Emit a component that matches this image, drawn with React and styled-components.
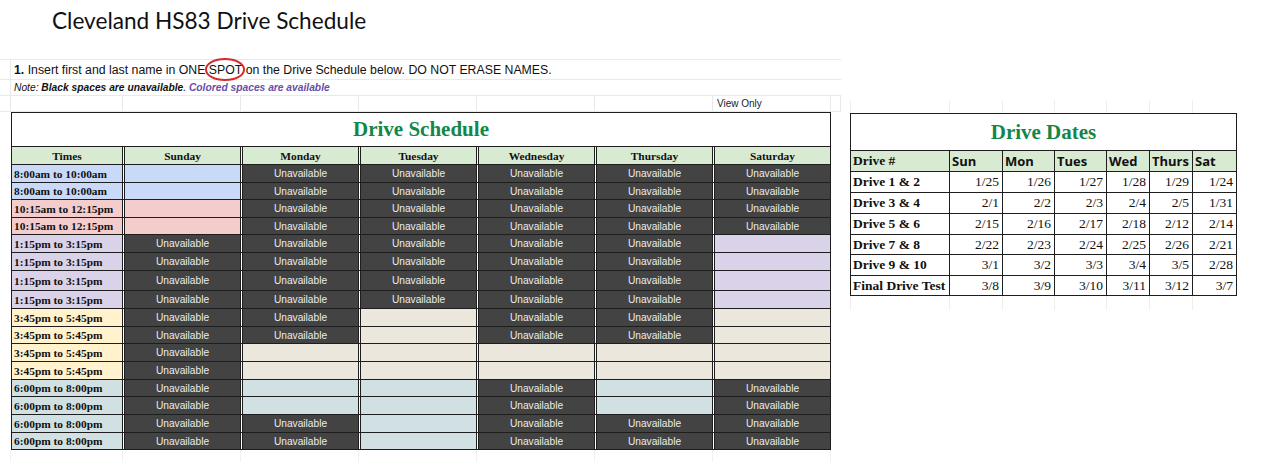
import React from "react";
import styled, { createGlobalStyle } from "styled-components";

const Global = createGlobalStyle`
  html, body { margin: 0; padding: 0; background: #ffffff; }
  * { box-sizing: border-box; }
`;

const C = {
  blue: "#c9daf8",
  pink: "#f4cccc",
  purple: "#d9d2e9",
  yellow: "#fff2cc",
  teal: "#d0e0e3",
  beige: "#ebe7dc",
  dark: "#434343",
  head: "#d9ead3",
  green: "#13874a",
  grid: "#e9e9e9",
  line: "#1e1e1e",
};

const Page = styled.div`
  display: flex;
  align-items: flex-start;
  width: 1278px;
  height: 475px;
  overflow: hidden;
`;

const Left = styled.div`
  display: flex;
  flex-direction: column;
  width: 841px;
  flex: none;
`;

const PageTitle = styled.h1`
  margin: 0;
  height: 59px;
  padding: 8px 0 0 52px;
  font-family: Lato, "Open Sans", sans-serif;
  font-weight: 400;
  font-size: 22.6px;
  line-height: 26px;
  color: #111;
`;

const SheetRow = styled.div`
  display: grid;
  grid-template-columns: 11px 112px repeat(6, 118px) 10px;
  height: ${(p) => p.$h}px;
  border-top: ${(p) => (p.$top ? `1px solid ${C.grid}` : "none")};
`;

const GhostCell = styled.div`
  border-right: 1px solid ${(p) => (p.$fade ? "#f1f1f1" : C.grid)};
  border-bottom: ${(p) => (p.$fade ? "none" : `1px solid ${C.grid}`)};
`;

const TextCell = styled.div`
  grid-column: 2 / -1;
  display: flex;
  align-items: center;
  padding-left: 3px;
  white-space: nowrap;
  border-bottom: 1px solid ${C.grid};
  font-family: "Liberation Sans", Arial, sans-serif;
  font-size: ${(p) => p.$size}px;
  font-style: ${(p) => (p.$italic ? "italic" : "normal")};
  color: #111;
`;

const Spot = styled.span`
  position: relative;
  &::after {
    content: "";
    position: absolute;
    left: -4px;
    right: -3px;
    top: -5px;
    bottom: -4px;
    border: 2px solid #d62b2b;
    border-radius: 50%;
  }
`;

const Purple = styled.b`
  color: #674ea7;
`;

const ViewOnly = styled.div`
  display: flex;
  align-items: center;
  padding-left: 4px;
  border-right: 1px solid ${C.grid};
  border-bottom: 1px solid ${C.grid};
  font-family: "Liberation Sans", Arial, sans-serif;
  font-size: 10px;
  color: #222;
  white-space: nowrap;
`;

const Schedule = styled.div`
  margin-left: 11px;
  width: 820px;
  border: 1px solid ${C.line};
  background: #fff;
`;

const BigTitle = styled.div`
  height: ${(p) => p.$h}px;
  display: flex;
  align-items: center;
  justify-content: center;
  font-family: "Liberation Serif", "Times New Roman", serif;
  font-weight: 700;
  font-size: 21px;
  color: ${C.green};
  border-bottom: ${(p) => (p.$border ? `1px solid ${C.line}` : "none")};
`;

const SRow = styled.div`
  display: grid;
  grid-template-columns: 110px repeat(6, 118px);
  height: ${(p) => p.$h}px;
  border-top: 1px solid ${C.line};
  background: #fff;
`;

const SCell = styled.div`
  display: flex;
  align-items: center;
  justify-content: ${(p) => (p.$left ? "flex-start" : "center")};
  padding-left: ${(p) => (p.$left ? "2px" : "0")};
  background: ${(p) => p.$bg};
  background-clip: padding-box;
  border-left: ${(p) => (p.$first ? "none" : `3px double ${C.line}`)};
  font-family: ${(p) =>
    p.$serif
      ? `"Liberation Serif", "Times New Roman", serif`
      : `"Liberation Sans", Arial, sans-serif`};
  font-weight: ${(p) => (p.$serif ? 700 : 400)};
  font-size: ${(p) => (p.$serif ? "11.4px" : "10.2px")};
  color: ${(p) => (p.$serif ? "#111" : "#ececec")};
  white-space: nowrap;
`;

const Right = styled.div`
  margin-left: 9px;
  margin-top: 100px;
  display: flex;
  flex-direction: column;
  width: 387px;
`;

const DGhost = styled.div`
  display: grid;
  grid-template-columns: 99px 53px 52px 52px 43px 43px 45px;
  height: ${(p) => p.$h}px;
`;

const DGhostCell = styled.div`
  border-left: 1px solid #eeeeee;
`;

const DTable = styled.div`
  width: 387px;
  border: 1px solid ${C.line};
`;

const DRow = styled.div`
  display: grid;
  grid-template-columns: 98px 53px 52px 52px 43px 43px 44px;
  height: ${(p) => p.$h}px;
  border-top: ${(p) => (p.$noTop ? "none" : `1px solid ${C.line}`)};
  background: ${(p) => (p.$head ? C.head : "#fff")};
`;

const DCell = styled.div`
  display: flex;
  align-items: center;
  justify-content: ${(p) => (p.$right ? "flex-end" : "flex-start")};
  padding: 0 3px 0 2px;
  border-left: ${(p) => (p.$first ? "none" : `1px solid ${C.line}`)};
  font-family: ${(p) =>
    p.$sans
      ? `"Open Sans", "Liberation Sans", sans-serif`
      : `"Liberation Serif", "Times New Roman", serif`};
  font-weight: ${(p) => (p.$bold ? 700 : 400)};
  font-size: ${(p) => (p.$sans ? "13px" : "13.5px")};
  color: #111;
  white-space: nowrap;
`;

const U = "U";
const B = "B";
const A = "A";

const rows = [
  { t: "8:00am to 10:00am", c: C.blue, h: 18, s: [A, U, U, U, U, U] },
  { t: "8:00am to 10:00am", c: C.blue, h: 17, s: [A, U, U, U, U, U] },
  { t: "10:15am to 12:15pm", c: C.pink, h: 18, s: [A, U, U, U, U, U] },
  { t: "10:15am to 12:15pm", c: C.pink, h: 17, s: [A, U, U, U, U, U] },
  { t: "1:15pm to 3:15pm", c: C.purple, h: 18, s: [U, U, U, U, U, A] },
  { t: "1:15pm to 3:15pm", c: C.purple, h: 18, s: [U, U, U, U, U, A] },
  { t: "1:15pm to 3:15pm", c: C.purple, h: 20, s: [U, U, U, U, U, A] },
  { t: "1:15pm to 3:15pm", c: C.purple, h: 18, s: [U, U, U, U, U, A] },
  { t: "3:45pm to 5:45pm", c: C.yellow, h: 18, s: [U, U, B, U, U, B] },
  { t: "3:45pm to 5:45pm", c: C.yellow, h: 17, s: [U, U, B, U, U, B] },
  { t: "3:45pm to 5:45pm", c: C.yellow, h: 18, s: [U, B, B, B, B, B] },
  { t: "3:45pm to 5:45pm", c: C.yellow, h: 18, s: [U, B, B, B, B, B] },
  { t: "6:00pm to 8:00pm", c: C.teal, h: 17, s: [U, A, A, U, A, U] },
  { t: "6:00pm to 8:00pm", c: C.teal, h: 18, s: [U, A, A, U, A, U] },
  { t: "6:00pm to 8:00pm", c: C.teal, h: 18, s: [U, U, A, U, U, U] },
  { t: "6:00pm to 8:00pm", c: C.teal, h: 17, s: [U, U, A, U, U, U] },
];

const days = ["Sunday", "Monday", "Tuesday", "Wednesday", "Thursday", "Saturday"];

const dates = [
  ["Drive 1 & 2", "1/25", "1/26", "1/27", "1/28", "1/29", "1/24"],
  ["Drive 3 & 4", "2/1", "2/2", "2/3", "2/4", "2/5", "1/31"],
  ["Drive 5 & 6", "2/15", "2/16", "2/17", "2/18", "2/12", "2/14"],
  ["Drive 7 & 8", "2/22", "2/23", "2/24", "2/25", "2/26", "2/21"],
  ["Drive 9 & 10", "3/1", "3/2", "3/3", "3/4", "3/5", "2/28"],
  ["Final Drive Test", "3/8", "3/9", "3/10", "3/11", "3/12", "3/7"],
];
const dateHeights = [21, 21, 21, 20, 21, 20];

function cellBg(kind, rowColor) {
  if (kind === U) return C.dark;
  if (kind === B) return C.beige;
  return rowColor;
}

export default function App() {
  return (
    <>
      <Global />
      <Page>
        <Left>
          <PageTitle>Cleveland HS83 Drive Schedule</PageTitle>
          <SheetRow $h={21} $top>
            <GhostCell />
            <TextCell $size={12.3}>
              <span>
                <b>1.</b> Insert first and last name in ONE <Spot>SPOT</Spot> on the Drive
                Schedule below. DO NOT ERASE NAMES.
              </span>
            </TextCell>
          </SheetRow>
          <SheetRow $h={16}>
            <GhostCell />
            <TextCell $size={10.25} $italic>
              <span>
                Note: <b>Black spaces are unavailable</b>. <Purple>Colored spaces are available</Purple>
              </span>
            </TextCell>
          </SheetRow>
          <SheetRow $h={16}>
            <GhostCell />
            <GhostCell />
            <GhostCell />
            <GhostCell />
            <GhostCell />
            <GhostCell />
            <GhostCell />
            <ViewOnly>View Only</ViewOnly>
            <GhostCell />
          </SheetRow>
          <Schedule>
            <BigTitle $h={33}>Drive Schedule</BigTitle>
            <SRow $h={18}>
              <SCell $first $serif $bg={C.head}>Times</SCell>
              {days.map((d) => (
                <SCell key={d} $serif $bg={C.head}>
                  {d}
                </SCell>
              ))}
            </SRow>
            {rows.map((r, i) => (
              <SRow key={i} $h={r.h}>
                <SCell $first $serif $left $bg={r.c}>
                  {r.t}
                </SCell>
                {r.s.map((k, j) => (
                  <SCell key={j} $bg={cellBg(k, r.c)}>
                    {k === U ? "Unavailable" : ""}
                  </SCell>
                ))}
              </SRow>
            ))}
          </Schedule>
          <SheetRow $h={12}>
            <GhostCell $fade />
            <GhostCell $fade />
            <GhostCell $fade />
            <GhostCell $fade />
            <GhostCell $fade />
            <GhostCell $fade />
            <GhostCell $fade />
            <GhostCell $fade />
          </SheetRow>
        </Left>
        <Right>
          <DGhost $h={13}>
            {Array.from({ length: 7 }).map((_, i) => (
              <DGhostCell key={i} />
            ))}
          </DGhost>
          <DTable>
            <BigTitle $h={37} $border>
              Drive Dates
            </BigTitle>
            <DRow $h={20} $head $noTop>
              <DCell $first $bold>
                Drive #
              </DCell>
              {["Sun", "Mon", "Tues", "Wed", "Thurs", "Sat"].map((d) => (
                <DCell key={d} $sans $bold>
                  {d}
                </DCell>
              ))}
            </DRow>
            {dates.map((r, i) => (
              <DRow key={r[0]} $h={dateHeights[i]}>
                <DCell $first $bold>
                  {r[0]}
                </DCell>
                {r.slice(1).map((v, j) => (
                  <DCell key={j} $right>
                    {v}
                  </DCell>
                ))}
              </DRow>
            ))}
          </DTable>
          <DGhost $h={14}>
            {Array.from({ length: 7 }).map((_, i) => (
              <DGhostCell key={i} />
            ))}
          </DGhost>
        </Right>
      </Page>
    </>
  );
}
